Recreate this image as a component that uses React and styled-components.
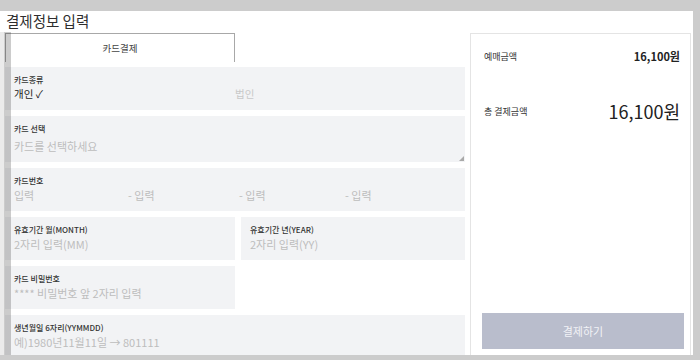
import styled, { createGlobalStyle } from "styled-components";

const GlobalStyle = createGlobalStyle`
  body {
    margin: 0;
    background: #cccccc;
    font-family: "Noto Sans CJK KR", "Noto Sans", sans-serif;
    color: #333;
  }
`;

const cardNumbers = ["입력", "- 입력", "- 입력", "- 입력"];

const App = () => {
  return (
    <>
      <GlobalStyle />
      <Frame>
        <Title>결제정보 입력</Title>
        <Columns>
          <FormColumn>
            <Tab>카드결제</Tab>
            <Fields>
              <Field>
                <Label>카드종류</Label>
                <RadioRow>
                  <Radio $checked>개인 ✓</Radio>
                  <Radio>법인</Radio>
                </RadioRow>
              </Field>
              <Field $tall>
                <Label>카드 선택</Label>
                <TextAreaHint>카드를 선택하세요</TextAreaHint>
                <ResizeHandle viewBox="0 0 5 5" width="5" height="5">
                  <path d="M5 0 L5 5 L0 5 Z" fill="#a9a9a9" />
                </ResizeHandle>
              </Field>
              <Field>
                <Label>카드번호</Label>
                <CardNumberRow>
                  {cardNumbers.map((n, i) => (
                    <Placeholder key={i}>{n}</Placeholder>
                  ))}
                </CardNumberRow>
              </Field>
              <Pair>
                <Field>
                  <Label>유효기간 월(MONTH)</Label>
                  <Placeholder>2자리 입력(MM)</Placeholder>
                </Field>
                <Field>
                  <Label>유효기간 년(YEAR)</Label>
                  <Placeholder>2자리 입력(YY)</Placeholder>
                </Field>
              </Pair>
              <Pair>
                <Field>
                  <Label>카드 비밀번호</Label>
                  <Placeholder>**** 비밀번호 앞 2자리 입력</Placeholder>
                </Field>
              </Pair>
              <Field>
                <Label>생년월일 6자리(YYMMDD)</Label>
                <Placeholder>예)1980년11월11일 → 801111</Placeholder>
              </Field>
            </Fields>
          </FormColumn>
          <Summary>
            <PriceRow>
              <PriceLabel>예매금액</PriceLabel>
              <PriceValue>16,100원</PriceValue>
            </PriceRow>
            <PriceRow $total>
              <PriceLabel>총 결제금액</PriceLabel>
              <TotalValue>16,100원</TotalValue>
            </PriceRow>
            <PayButton>결제하기</PayButton>
          </Summary>
        </Columns>
        <EdgeShade />
      </Frame>
    </>
  );
};

const Frame = styled.div`
  position: relative;
  width: 693px;
  height: 344px;
  margin-top: 11px;
  background: #fff;
  overflow: hidden;
`;

const Title = styled.h2`
  margin: 0;
  height: 22px;
  padding-left: 6px;
  font-size: 14.5px;
  font-weight: 400;
  line-height: 19px;
  color: #2e2e2e;
`;

const Columns = styled.div`
  display: flex;
  gap: 5px;
  padding-left: 5px;
`;

const FormColumn = styled.div`
  width: 460px;
  display: flex;
  flex-direction: column;
`;

// tab on top of the form
const Tab = styled.div`
  width: 230px;
  height: 29px;
  box-sizing: border-box;
  border: 1px solid #a8a8a8;
  border-bottom: none;
  display: flex;
  align-items: center;
  justify-content: center;
  font-size: 9.5px;
  color: #444;
  margin-bottom: 5px;
`;

const Fields = styled.div`
  display: flex;
  flex-direction: column;
  gap: 6px;
`;

const Pair = styled.div`
  display: grid;
  grid-template-columns: 230px 224px;
  gap: 6px;
`;

const Field = styled.div`
  position: relative;
  height: ${(p) => (p.$tall ? "46px" : "43px")};
  box-sizing: border-box;
  padding: 7px 9px 0;
  background: #f2f3f5;
`;

const Label = styled.div`
  font-size: 8px;
  line-height: 12px;
  font-weight: 500;
  color: #333;
  white-space: nowrap;
`;

const RadioRow = styled.div`
  display: grid;
  grid-template-columns: 221px 1fr;
`;

const Radio = styled.span`
  font-size: 10.5px;
  line-height: 16px;
  color: ${(p) => (p.$checked ? "#222" : "#c8c8c8")};
`;

const Placeholder = styled.div`
  font-size: 11px;
  line-height: 16px;
  color: #bdbdbd;
  white-space: nowrap;
`;

const TextAreaHint = styled(Placeholder)`
  padding-top: 3px;
`;

const ResizeHandle = styled.svg`
  position: absolute;
  right: 1px;
  bottom: 1px;
`;

const CardNumberRow = styled.div`
  display: grid;
  grid-template-columns: 114px 111px 106px 1fr;
`;

// right side summary
const Summary = styled.div`
  width: 221px;
  height: 340px;
  box-sizing: border-box;
  border: 1px solid #e4e4e4;
  padding: 0 6px 0 11px;
  display: flex;
  flex-direction: column;
`;

const PriceRow = styled.div`
  display: flex;
  justify-content: space-between;
  align-items: center;
  padding: 0 4px 0 2px;
  height: ${(p) => (p.$total ? "26px" : "20px")};
  margin-top: ${(p) => (p.$total ? "32px" : "12px")};
`;

const PriceLabel = styled.span`
  font-size: 9px;
  color: #333;
`;

const PriceValue = styled.span`
  font-size: 11px;
  font-weight: 700;
  color: #222;
`;

const TotalValue = styled.span`
  font-size: 18px;
  font-weight: 400;
  color: #222;
`;

const PayButton = styled.button`
  margin-top: 189px;
  height: 36px;
  border: none;
  background: #b9bdcc;
  color: #f1f2f6;
  font-family: inherit;
  font-size: 11px;
`;

// gray shade over the left edge of the page
const EdgeShade = styled.div`
  position: absolute;
  left: 0;
  top: 21px;
  bottom: 0;
  width: 11px;
  pointer-events: none;
  background: linear-gradient(
    to right,
    rgba(0, 0, 0, 0.08) 0 4px,
    rgba(0, 0, 0, 0.2) 4px
  );
`;

export default App;
